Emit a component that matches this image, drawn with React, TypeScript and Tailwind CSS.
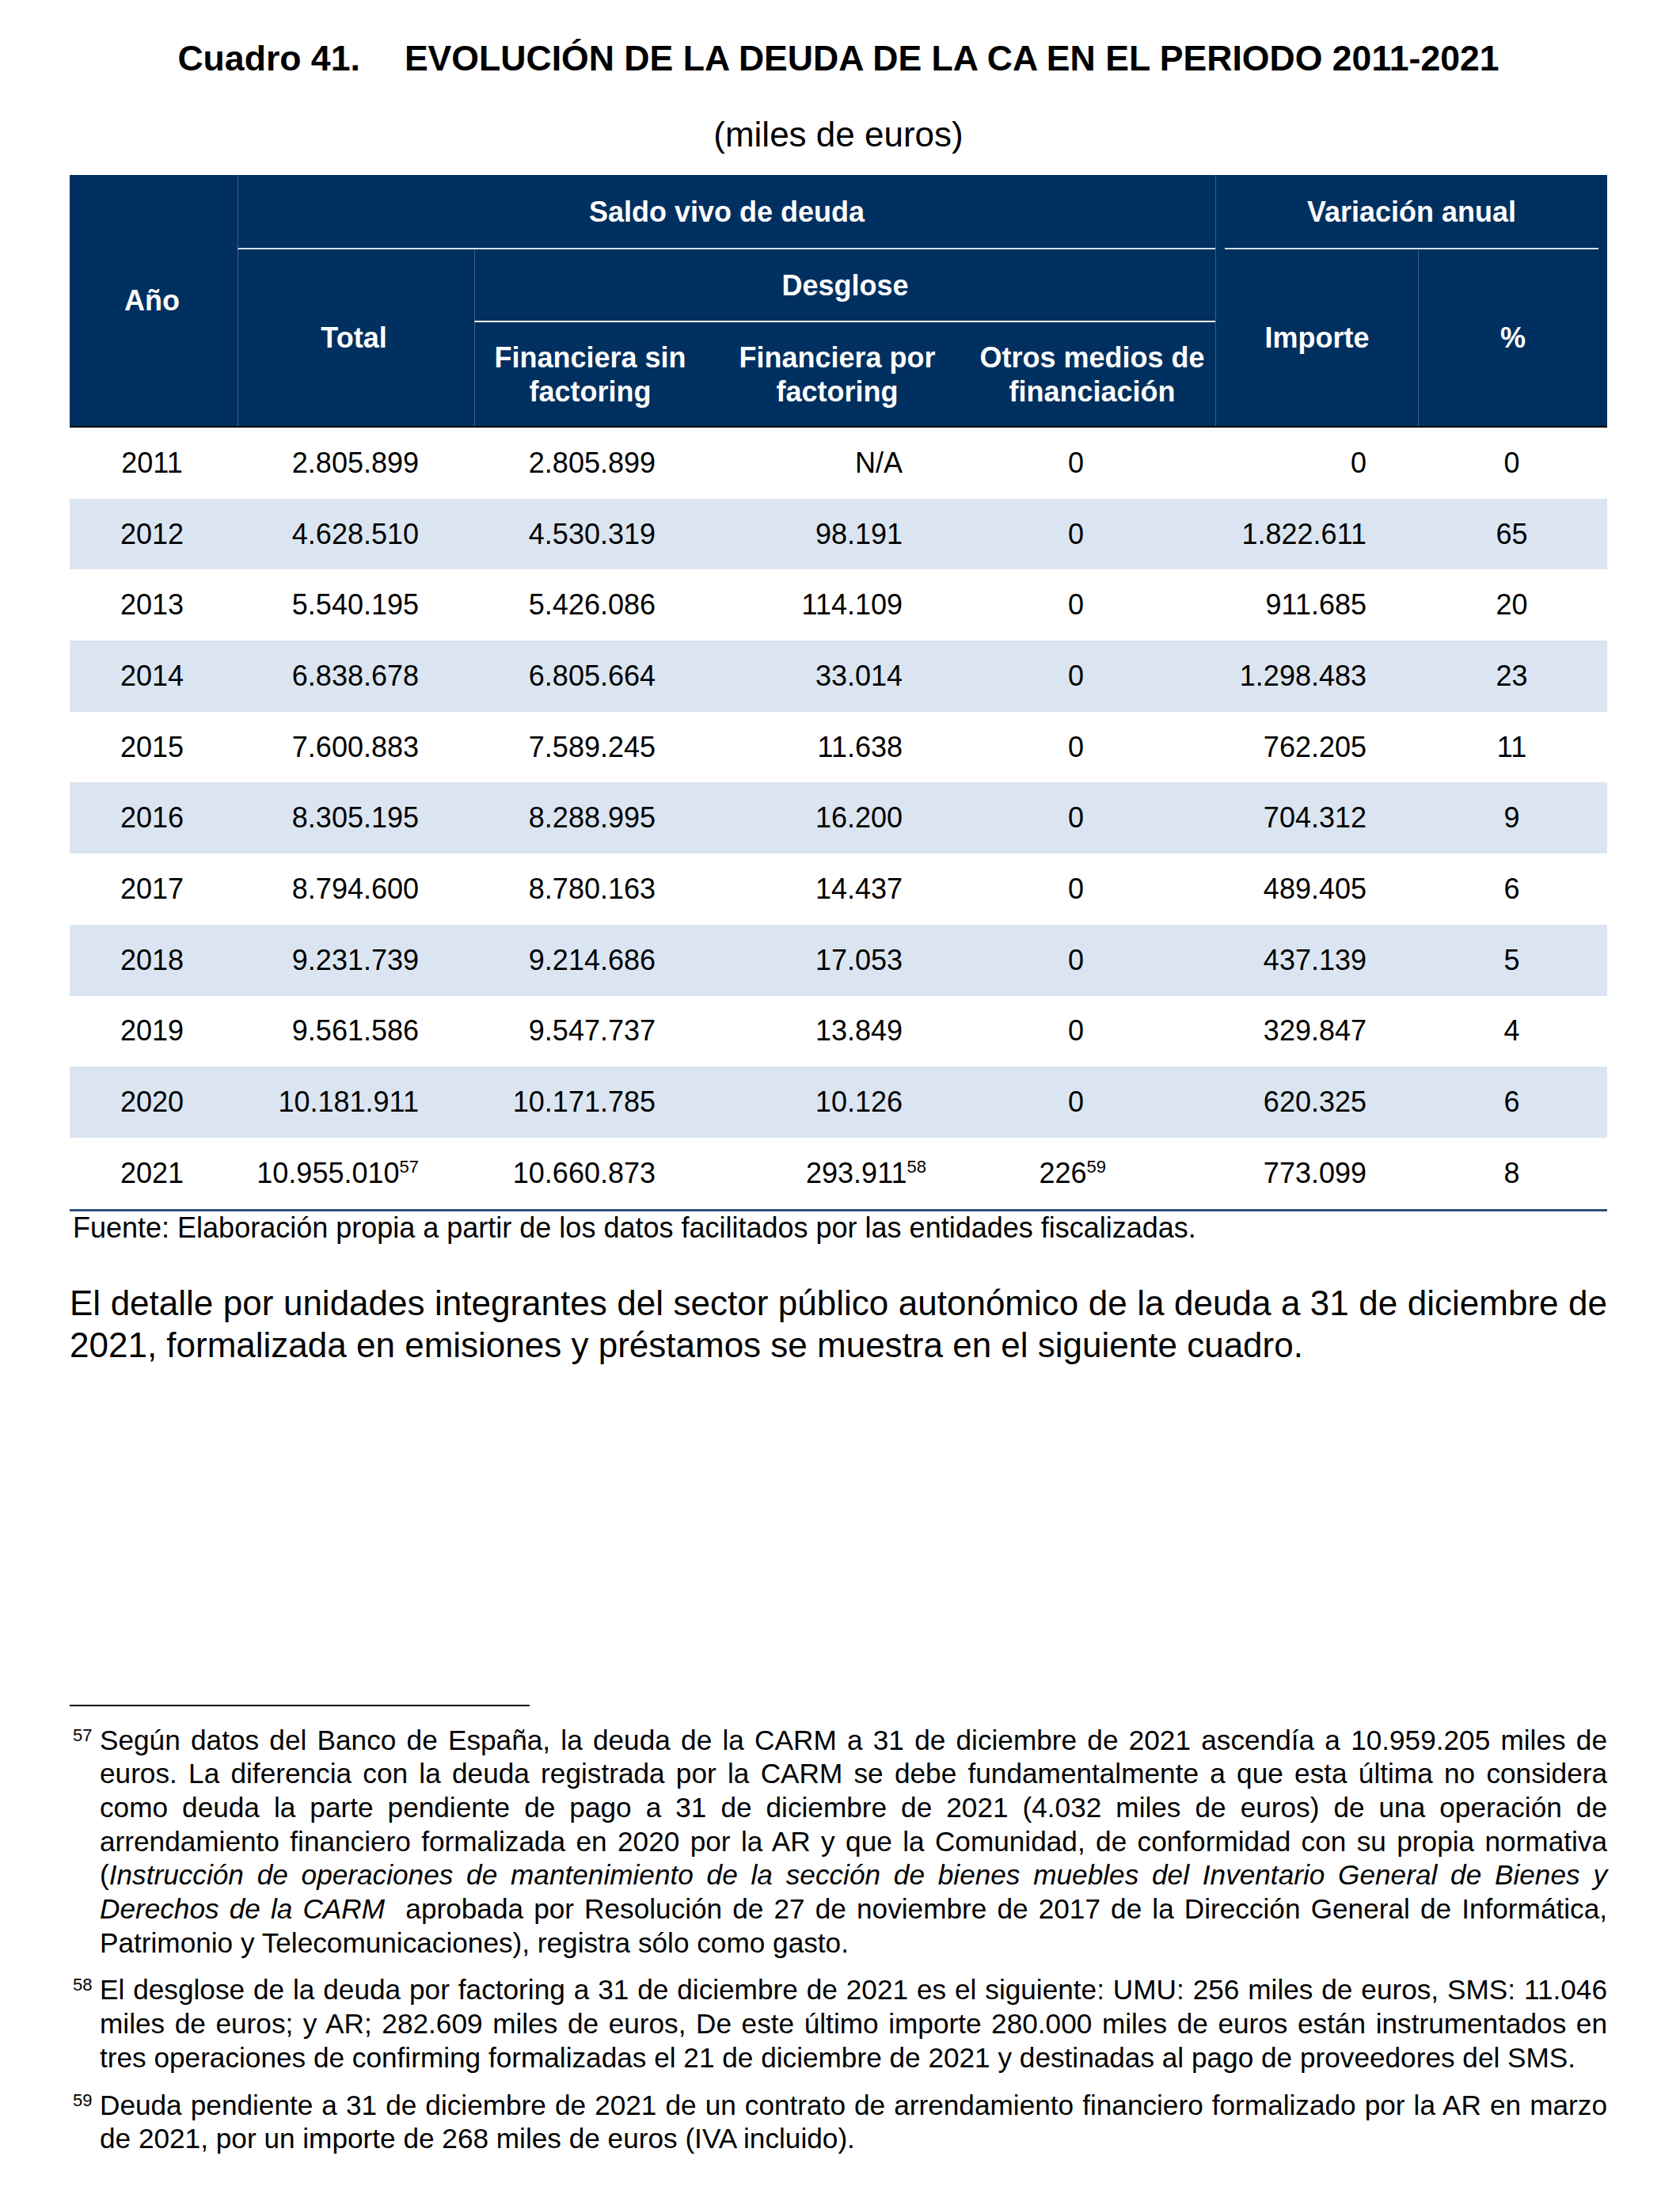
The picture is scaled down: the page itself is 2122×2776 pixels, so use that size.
const rows: { year: string; total: string; totalSup?: string; sin: string; por: string; porSup?: string; otros: string; otrosSup?: string; importe: string; pct: string }[] = [
  { year: '2011', total: '2.805.899', sin: '2.805.899', por: 'N/A', otros: '0', importe: '0', pct: '0' },
  { year: '2012', total: '4.628.510', sin: '4.530.319', por: '98.191', otros: '0', importe: '1.822.611', pct: '65' },
  { year: '2013', total: '5.540.195', sin: '5.426.086', por: '114.109', otros: '0', importe: '911.685', pct: '20' },
  { year: '2014', total: '6.838.678', sin: '6.805.664', por: '33.014', otros: '0', importe: '1.298.483', pct: '23' },
  { year: '2015', total: '7.600.883', sin: '7.589.245', por: '11.638', otros: '0', importe: '762.205', pct: '11' },
  { year: '2016', total: '8.305.195', sin: '8.288.995', por: '16.200', otros: '0', importe: '704.312', pct: '9' },
  { year: '2017', total: '8.794.600', sin: '8.780.163', por: '14.437', otros: '0', importe: '489.405', pct: '6' },
  { year: '2018', total: '9.231.739', sin: '9.214.686', por: '17.053', otros: '0', importe: '437.139', pct: '5' },
  { year: '2019', total: '9.561.586', sin: '9.547.737', por: '13.849', otros: '0', importe: '329.847', pct: '4' },
  { year: '2020', total: '10.181.911', sin: '10.171.785', por: '10.126', otros: '0', importe: '620.325', pct: '6' },
  {
    year: '2021',
    total: '10.955.010',
    totalSup: '57',
    sin: '10.660.873',
    por: '293.911',
    porSup: '58',
    otros: '226',
    otrosSup: '59',
    importe: '773.099',
    pct: '8',
  },
];

const cols = 'grid grid-cols-[212px_299px_296px_325px_315px_256px_239px]';
const head = 'flex items-center justify-center text-center text-white font-bold text-[36px] leading-[43px]';
const vline = 'border-l border-[#3d5c82]';

function Sup({ n }: { n: string }) {
  return <span className="relative -top-[13px] text-[22px] leading-none">{n}</span>;
}

export default function App() {
  return (
    <div className="w-[2122px] min-h-[2776px] bg-white font-['Liberation_Sans',Arial,sans-serif] text-black">
      <div className="ml-[88px] w-[1942px] pt-[49px]">
        {/* titulo */}
        <div className="flex justify-center gap-[56px] text-[44.6px] font-bold leading-[50px]">
          <span>Cuadro 41.</span>
          <span>EVOLUCIÓN DE LA DEUDA DE LA CA EN EL PERIODO 2011-2021</span>
        </div>
        <p className="mt-[46px] text-center text-[44px] leading-[50px]">(miles de euros)</p>

        {/* cabecera */}
        <div className={`${cols} mt-[26px] grid-rows-[94px_92px_131px] border-b-2 border-black bg-[#00305f]`}>
          <div className={`${head} col-start-1 row-start-1 row-span-3 pr-[4px]`}>Año</div>
          <div className={`${head} ${vline} col-start-2 col-span-4 row-start-1 border-b-2 border-b-[#d6dde6]`}>
            Saldo vivo de deuda
          </div>
          <div className={`${vline} col-start-6 col-span-2 row-start-1 flex flex-col`}>
            <div className={`${head} flex-1`}>Variación anual</div>
            <div className="mx-[11px] h-[2px] bg-[#d6dde6]" />
          </div>
          <div className={`${head} ${vline} col-start-2 row-start-2 row-span-2 pr-[6px]`}>Total</div>
          <div className={`${head} ${vline} col-start-3 col-span-3 row-start-2 border-b-2 border-b-white`}>Desglose</div>
          <div className={`${head} ${vline} col-start-3 row-start-3 pr-[4px]`}>
            Financiera sin
            <br />
            factoring
          </div>
          <div className={`${head} col-start-4 row-start-3`}>
            Financiera por
            <br />
            factoring
          </div>
          <div className={`${head} col-start-5 row-start-3 pl-[4px]`}>
            Otros medios de
            <br />
            financiación
          </div>
          <div className={`${head} ${vline} col-start-6 row-start-2 row-span-2`}>Importe</div>
          <div className={`${head} ${vline} col-start-7 row-start-2 row-span-2`}>%</div>
        </div>

        {/* filas */}
        <div className="border-b-[3px] border-[#2b4f7c]">
          {rows.map((r, i) => (
            <div
              key={r.year}
              className={`${cols} h-[89.7px] items-center text-[36px] leading-none ${i % 2 === 1 ? 'bg-[#dbe5f1]' : ''}`}
            >
              <div className="pr-[4px] text-center">{r.year}</div>
              <div className="pr-[70px] text-right">
                {r.total}
                {r.totalSup && <Sup n={r.totalSup} />}
              </div>
              <div className="pr-[67px] text-right">{r.sin}</div>
              <div className="pr-[80px] text-right">
                {r.por}
                {r.porSup && (
                  <span className="-mr-[30px]">
                    <Sup n={r.porSup} />
                  </span>
                )}
              </div>
              <div className="pr-[166px] text-right">
                {r.otros}
                {r.otrosSup && (
                  <span className="-mr-[28px]">
                    <Sup n={r.otrosSup} />
                  </span>
                )}
              </div>
              <div className="pr-[65px] text-right">{r.importe}</div>
              <div className="pr-[2px] text-center">{r.pct}</div>
            </div>
          ))}
        </div>
        <p className="pl-[4px] text-[36px] leading-[42px]">
          Fuente: Elaboración propia a partir de los datos facilitados por las entidades fiscalizadas.
        </p>

        <p className="mt-[47px] text-justify text-[44px] leading-[53px]">
          El detalle por unidades integrantes del sector público autonómico de la deuda a 31 de diciembre de 2021,
          formalizada en emisiones y préstamos se muestra en el siguiente cuadro.
        </p>

        {/* notas al pie */}
        <div className="mt-[428px] h-[2px] w-[581px] bg-black" />
        <div className="mt-[22px] space-y-[17px] text-[35.2px] leading-[42.7px]">
          <p className="pl-[38px] text-justify">
            <span className="-ml-[34px] inline-block w-[34px] align-top text-[22px] leading-[30px]">57</span>
            Según datos del Banco de España, la deuda de la CARM a 31 de diciembre de 2021 ascendía a 10.959.205 miles
            de euros. La diferencia con la deuda registrada por la CARM se debe fundamentalmente a que esta última no
            considera como deuda la parte pendiente de pago a 31 de diciembre de 2021 (4.032 miles de euros) de una
            operación de arrendamiento financiero formalizada en 2020 por la AR y que la Comunidad, de conformidad con
            su propia normativa (
            <i>
              Instrucción de operaciones de mantenimiento de la sección de bienes muebles del Inventario General de
              Bienes y
            </i>{' '}
            <i>Derechos de la CARM</i>
            {'\u00a0 '}aprobada por Resolución de 27 de noviembre de 2017 de la Dirección General de Informática,
            Patrimonio y Telecomunicaciones), registra sólo como gasto.
          </p>
          <p className="pl-[38px] text-justify">
            <span className="-ml-[34px] inline-block w-[34px] align-top text-[22px] leading-[30px]">58</span>
            El desglose de la deuda por factoring a 31 de diciembre de 2021 es el siguiente: UMU: 256 miles de euros,
            SMS: 11.046 miles de euros; y AR; 282.609 miles de euros, De este último importe 280.000 miles de euros
            están instrumentados en tres operaciones de confirming formalizadas el 21 de diciembre de 2021 y destinadas
            al pago de proveedores del SMS.
          </p>
          <p className="pl-[38px] text-justify">
            <span className="-ml-[34px] inline-block w-[34px] align-top text-[22px] leading-[30px]">59</span>
            Deuda pendiente a 31 de diciembre de 2021 de un contrato de arrendamiento financiero formalizado por la AR
            en marzo de 2021, por un importe de 268 miles de euros (IVA incluido).
          </p>
        </div>
      </div>
    </div>
  );
}
